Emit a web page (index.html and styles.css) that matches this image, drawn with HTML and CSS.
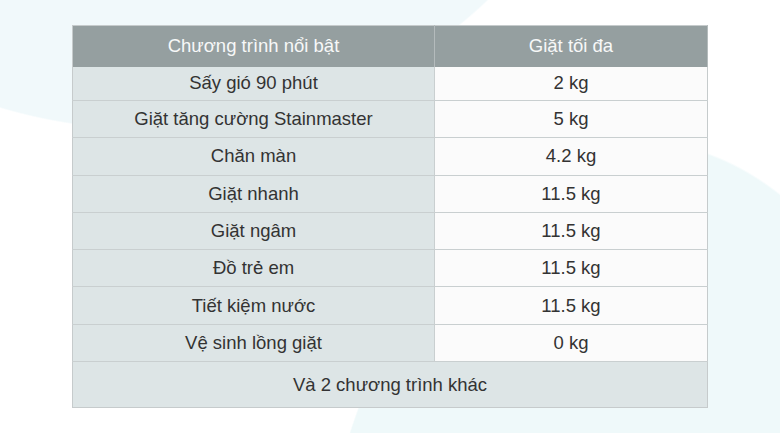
FILE: index.html
```html
<!DOCTYPE html>
<html lang="vi">
<head>
<meta charset="utf-8">
<link rel="stylesheet" href="styles.css">
</head>
<body>
<div class="page">
  <table class="programs">
    <thead>
      <tr class="head"><th class="c1">Chương trình nổi bật</th><th class="c2">Giặt tối đa</th></tr>
    </thead>
    <tbody>
      <tr class="first"><td class="c1">Sấy gió 90 phút</td><td class="c2">2 kg</td></tr>
      <tr><td class="c1">Giặt tăng cường Stainmaster</td><td class="c2">5 kg</td></tr>
      <tr><td class="c1">Chăn màn</td><td class="c2">4.2 kg</td></tr>
      <tr><td class="c1">Giặt nhanh</td><td class="c2">11.5 kg</td></tr>
      <tr><td class="c1">Giặt ngâm</td><td class="c2">11.5 kg</td></tr>
      <tr><td class="c1">Đồ trẻ em</td><td class="c2">11.5 kg</td></tr>
      <tr><td class="c1">Tiết kiệm nước</td><td class="c2">11.5 kg</td></tr>
      <tr><td class="c1">Vệ sinh lồng giặt</td><td class="c2">0 kg</td></tr>
    </tbody>
    <tfoot>
      <tr class="foot"><td class="more" colspan="2">Và 2 chương trình khác</td></tr>
    </tfoot>
  </table>
</div>
</body>
</html>
```
FILE: styles.css
```css
html, body {
  margin: 0;
  padding: 0;
}
body {
  width: 780px;
  height: 433px;
  overflow: hidden;
  background-color: #ffffff;
  background-image:
    radial-gradient(ellipse 450px 380px at 150px -250px, #f1f9fb 99.6%, rgba(241,249,251,0) 100%),
    radial-gradient(ellipse 331px 559px at 640px 700px, #eff9fa 99.6%, rgba(239,249,250,0) 100%);
  background-repeat: no-repeat;
  font-family: "Liberation Sans", Arial, sans-serif;
  color: #333333;
}
.page {
  padding: 25px 0 0 72px;
}
.programs {
  border-collapse: collapse;
  width: 636px;
  table-layout: fixed;
  font-size: 18.5px;
  line-height: 20px;
  border: 1px solid #c6cbcc;
}
.programs th,
.programs td {
  text-align: center;
  padding: 0;
  font-weight: normal;
}
.programs .head { height: 41px; }
.programs th {
  background: #959fa0;
  color: #f7f8f8;
  border-right: 1px solid #b4bbbc;
}
.programs .c1 { width: 361px; }
.programs tbody tr { height: 37.3px; }
.programs tbody tr.first { height: 34px; }
.programs tbody td {
  border-bottom: 1px solid #c9cfd0;
}
.programs tbody td.c1 {
  background: #dde5e6;
  border-right: 1px solid #c9cfd0;
}
.programs tbody td.c2 {
  background: #fbfbfb;
}
.programs .foot { height: 46px; }
.programs tfoot td {
  background: #dde5e6;
}
```
